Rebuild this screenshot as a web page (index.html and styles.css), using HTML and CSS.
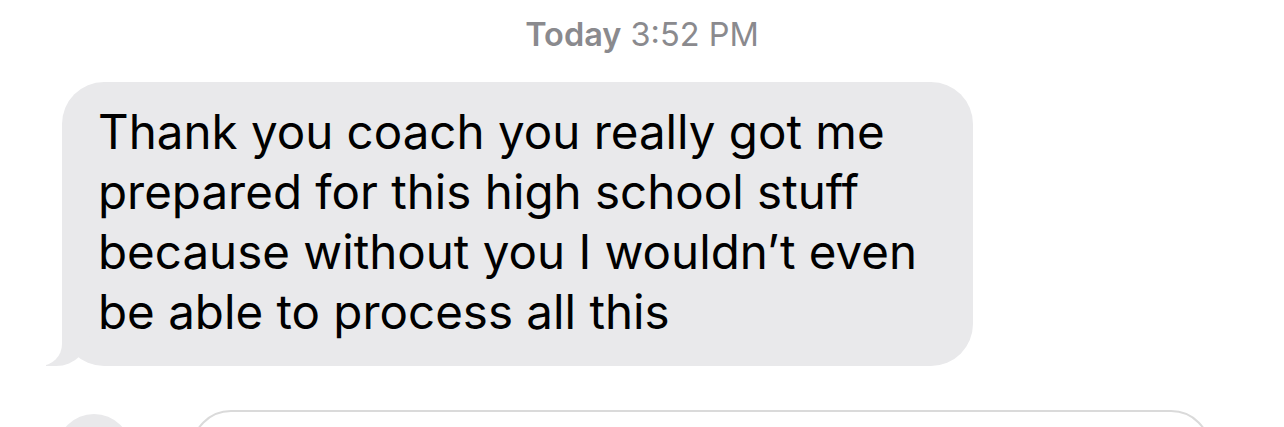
FILE: index.html
```html
<!DOCTYPE html>
<html lang="en">
<head>
    <meta charset="UTF-8">
    <meta name="viewport" content="width=device-width, initial-scale=1.0">
    <title>Messages</title>
    <link rel="stylesheet" href="styles.css">
</head>
<body>

    <div class="thread">
        <div class="timestamp"><b>Today</b> 3:52 PM</div>

        <div class="bubble-row">
            <div class="bubble">
                Thank you coach you really got me prepared for this high school stuff because without you I wouldn’t even be able to process all this
            </div>
        </div>
    </div>

    <div class="compose">
        <div class="apps-button"></div>
        <div class="input-field"></div>
    </div>

</body>
</html>
```

FILE: styles.css
```css
* {
    margin: 0;
    padding: 0;
    box-sizing: border-box;
}

body {
    font-family: Inter, "Noto Sans", sans-serif;
    background-color: #fff;
    color: #000;
    width: 1284px;
    height: 427px;
    overflow: hidden;
}

.timestamp {
    padding-top: 15px;
    text-align: center;
    font-size: 32.5px;
    line-height: 40px;
    color: #8a8a8e;
}

.timestamp b {
    font-weight: 600;
}

.bubble-row {
    padding: 27px 0 0 62px;
}

.bubble {
    position: relative;
    width: 911px;
    height: 284px;
    padding: 20px 36px 0;
    background: #e9e9eb;
    border-radius: 42px;
    font-size: 47.5px;
    line-height: 60px;
}

/* tail on the bottom-left corner */
.bubble::before {
    content: "";
    position: absolute;
    bottom: 0;
    left: -16px;
    width: 44px;
    height: 44px;
    background: #e9e9eb;
    border-bottom-right-radius: 34px;
}

.bubble::after {
    content: "";
    position: absolute;
    bottom: 0;
    left: -24px;
    width: 24px;
    height: 44px;
    background: #fff;
    border-bottom-right-radius: 22px;
}

.compose {
    display: flex;
    align-items: flex-start;
    gap: 60px;
    height: 61px;
    padding: 44px 0 0 57px;
    overflow: hidden;
}

.apps-button {
    flex: none;
    width: 74px;
    height: 74px;
    margin-top: 4px;
    border-radius: 50%;
    background: #e9e9eb;
}

.input-field {
    flex: none;
    width: 1020px;
    height: 80px;
    border: 2px solid #dadada;
    border-radius: 40px;
}
```
